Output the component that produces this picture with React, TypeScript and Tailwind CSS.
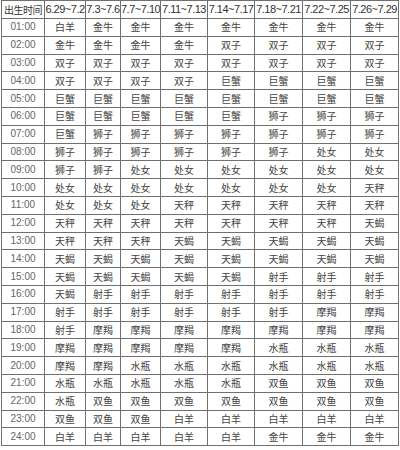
const dates = [
  '6.29~7.2',
  '7.3~7.6',
  '7.7~7.10',
  '7.11~7.13',
  '7.14~7.17',
  '7.18~7.21',
  '7.22~7.25',
  '7.26~7.29',
];

const widths = [43, 41, 35, 40, 47, 47, 48, 48, 48];

const rows: [string, string[]][] = [
  ['01:00', ['白羊', '金牛', '金牛', '金牛', '金牛', '金牛', '金牛', '金牛']],
  ['02:00', ['金牛', '金牛', '金牛', '金牛', '双子', '双子', '双子', '双子']],
  ['03:00', ['双子', '双子', '双子', '双子', '双子', '双子', '双子', '双子']],
  ['04:00', ['双子', '双子', '双子', '双子', '巨蟹', '巨蟹', '巨蟹', '巨蟹']],
  ['05:00', ['巨蟹', '巨蟹', '巨蟹', '巨蟹', '巨蟹', '巨蟹', '巨蟹', '巨蟹']],
  ['06:00', ['巨蟹', '巨蟹', '巨蟹', '巨蟹', '巨蟹', '狮子', '狮子', '狮子']],
  ['07:00', ['巨蟹', '狮子', '狮子', '狮子', '狮子', '狮子', '狮子', '狮子']],
  ['08:00', ['狮子', '狮子', '狮子', '狮子', '狮子', '狮子', '处女', '处女']],
  ['09:00', ['狮子', '狮子', '处女', '处女', '处女', '处女', '处女', '处女']],
  ['10:00', ['处女', '处女', '处女', '处女', '处女', '处女', '处女', '天秤']],
  ['11:00', ['处女', '处女', '处女', '天秤', '天秤', '天秤', '天秤', '天秤']],
  ['12:00', ['天秤', '天秤', '天秤', '天秤', '天秤', '天秤', '天秤', '天蝎']],
  ['13:00', ['天秤', '天秤', '天秤', '天蝎', '天蝎', '天蝎', '天蝎', '天蝎']],
  ['14:00', ['天蝎', '天蝎', '天蝎', '天蝎', '天蝎', '天蝎', '天蝎', '天蝎']],
  ['15:00', ['天蝎', '天蝎', '天蝎', '天蝎', '天蝎', '射手', '射手', '射手']],
  ['16:00', ['天蝎', '射手', '射手', '射手', '射手', '射手', '射手', '射手']],
  ['17:00', ['射手', '射手', '射手', '射手', '射手', '射手', '摩羯', '摩羯']],
  ['18:00', ['射手', '摩羯', '摩羯', '摩羯', '摩羯', '摩羯', '摩羯', '摩羯']],
  ['19:00', ['摩羯', '摩羯', '摩羯', '摩羯', '摩羯', '水瓶', '水瓶', '水瓶']],
  ['20:00', ['摩羯', '摩羯', '水瓶', '水瓶', '水瓶', '水瓶', '水瓶', '水瓶']],
  ['21:00', ['水瓶', '水瓶', '水瓶', '水瓶', '水瓶', '双鱼', '双鱼', '双鱼']],
  ['22:00', ['水瓶', '双鱼', '双鱼', '双鱼', '双鱼', '双鱼', '双鱼', '双鱼']],
  ['23:00', ['双鱼', '双鱼', '双鱼', '白羊', '白羊', '白羊', '白羊', '白羊']],
  ['24:00', ['白羊', '白羊', '白羊', '白羊', '白羊', '金牛', '金牛', '金牛']],
];

export default function App() {
  return (
    <div className="w-[400px] h-[450px] bg-white pl-px overflow-hidden font-['Liberation_Sans','Noto_Sans_CJK_SC',sans-serif]">
      <table className="table-fixed border-collapse w-[397px] border border-[#707070]">
        <colgroup>
          {widths.map((w, i) => (
            <col key={i} style={{ width: w }} />
          ))}
        </colgroup>
        <thead>
          <tr className="h-[18px]">
            <th className="border border-[#707070] p-0 text-[10px] font-normal text-[#333] tracking-[-0.5px] whitespace-nowrap font-['Noto_Sans_CJK_SC',sans-serif] leading-none">
              出生时间
            </th>
            {dates.map((d) => (
              <th
                key={d}
                className="border border-[#707070] p-0 text-[11px] font-normal text-[#333] tracking-[-0.5px] whitespace-nowrap leading-none"
              >
                {d}
              </th>
            ))}
          </tr>
        </thead>
        <tbody>
          {rows.map(([time, signs]) => (
            <tr key={time} className="h-[17.8px]">
              <td className="border border-[#707070] p-0 text-center text-[10px] text-[#666] leading-none">
                {time}
              </td>
              {signs.map((s, i) => (
                <td
                  key={i}
                  className="border border-[#707070] p-0 text-center text-[10px] text-[#444] leading-none font-['Noto_Sans_CJK_SC',sans-serif]"
                >
                  {s}
                </td>
              ))}
            </tr>
          ))}
        </tbody>
      </table>
    </div>
  );
}
